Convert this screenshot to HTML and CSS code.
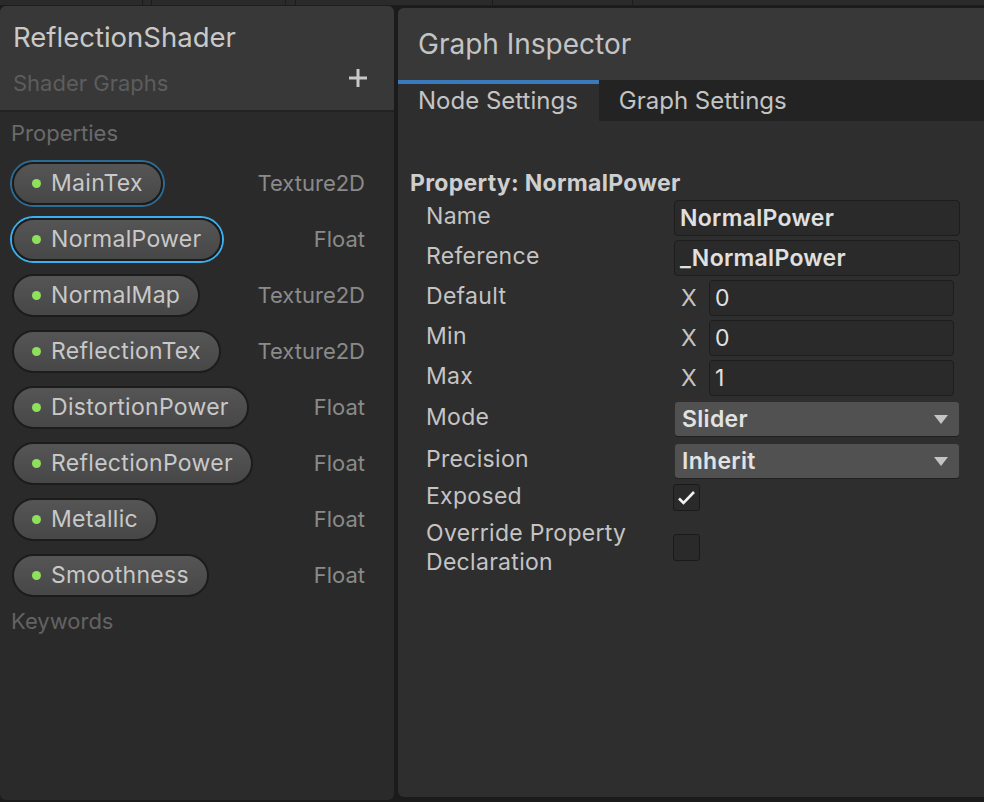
FILE: index.html
```html
<!DOCTYPE html>
<html>
<head>
<meta charset="utf-8">
<link rel="stylesheet" href="styles.css">
</head>
<body>
<div class="topstrip">
  <span class="seg w143"></span><span class="seg w9"></span><span class="seg w134"></span><span class="seg w10"></span><span class="seg w197"></span><span class="seg w140"></span><span class="seg grow"></span>
</div>
<div class="main">
  <section class="blackboard">
    <header class="bb-header">
      <div class="bb-title">ReflectionShader</div>
      <div class="bb-sub">
        <span>Shader Graphs</span>
        <svg class="plus" width="20" height="20" viewBox="0 0 20 20"><path d="M10 1v18M1 10h18" stroke="#c8c8c8" stroke-width="3"/></svg>
      </div>
    </header>
    <div class="bb-body">
      <div class="section-label">Properties</div>
      <ul class="props">
        <li class="prop-row"><span class="pill sel"><i class="dot"></i>MainTex</span><span class="type">Texture2D</span></li>
        <li class="prop-row"><span class="pill focus"><i class="dot"></i>NormalPower</span><span class="type">Float</span></li>
        <li class="prop-row"><span class="pill"><i class="dot"></i>NormalMap</span><span class="type">Texture2D</span></li>
        <li class="prop-row"><span class="pill"><i class="dot"></i>ReflectionTex</span><span class="type">Texture2D</span></li>
        <li class="prop-row"><span class="pill"><i class="dot"></i>DistortionPower</span><span class="type">Float</span></li>
        <li class="prop-row"><span class="pill"><i class="dot"></i>ReflectionPower</span><span class="type">Float</span></li>
        <li class="prop-row"><span class="pill"><i class="dot"></i>Metallic</span><span class="type">Float</span></li>
        <li class="prop-row"><span class="pill"><i class="dot"></i>Smoothness</span><span class="type">Float</span></li>
      </ul>
      <div class="section-label kw">Keywords</div>
    </div>
  </section>
  <section class="inspector">
    <header class="insp-header">Graph Inspector</header>
    <nav class="tabs">
      <div class="tab active">Node Settings</div>
      <div class="tab">Graph Settings</div>
    </nav>
    <div class="insp-body">
      <div class="prop-title">Property: NormalPower</div>
      <div class="fields">
        <div class="row"><span class="label">Name</span><span class="text-field">NormalPower</span></div>
        <div class="row"><span class="label">Reference</span><span class="text-field">_NormalPower</span></div>
        <div class="row"><span class="label">Default</span><span class="vec"><span class="axis">X</span><span class="text-field num">0</span></span></div>
        <div class="row"><span class="label">Min</span><span class="vec"><span class="axis">X</span><span class="text-field num">0</span></span></div>
        <div class="row"><span class="label">Max</span><span class="vec"><span class="axis">X</span><span class="text-field num">1</span></span></div>
        <div class="row drop-row"><span class="label">Mode</span><span class="dropdown"><span>Slider</span><svg width="14" height="9" viewBox="0 0 14 9"><path d="M0 0h14L7 9z" fill="#c4c4c4"/></svg></span></div>
        <div class="row drop-row"><span class="label">Precision</span><span class="dropdown"><span>Inherit</span><svg width="14" height="9" viewBox="0 0 14 9"><path d="M0 0h14L7 9z" fill="#c4c4c4"/></svg></span></div>
        <div class="row check-row"><span class="label">Exposed</span><span class="checkbox"><svg width="25" height="25" viewBox="0 0 25 25"><path d="M5 13.5l4.5 4.5L20 7" fill="none" stroke="#f2f2f2" stroke-width="2.6"/></svg></span></div>
        <div class="row check-row"><span class="label multi">Override Property<br>Declaration</span><span class="checkbox"></span></div>
      </div>
    </div>
  </section>
</div>
</body>
</html>
```

FILE: styles.css
```css
* { box-sizing: border-box; margin: 0; padding: 0; }
html, body { width: 984px; height: 802px; overflow: hidden; }
body {
  background: #1b1b1b;
  font-family: Inter, "Noto Sans", sans-serif;
  color: #c4c4c4;
}

.topstrip {
  height: 6px;
  display: flex;
  background: #2a2a2a;
  border-bottom: 1px solid #1e1e1e;
}
.seg { border-right: 1px solid #1c1c1c; height: 100%; }
.w143 { width: 143px; }
.w9 { width: 9px; }
.w134 { width: 134px; }
.w10 { width: 10px; }
.w197 { width: 197px; }
.w140 { width: 140px; }
.grow { flex: 1; border-right: none; }

.main {
  display: flex;
  gap: 4px;
  height: 796px;
}

/* Blackboard */
.blackboard {
  width: 394px;
  margin-bottom: 2px;
  background: #2a2a2a;
  border-radius: 6px;
  overflow: hidden;
  display: flex;
  flex-direction: column;
}
.bb-header {
  height: 106px;
  background: #383838;
  border-bottom: 2px solid #222222;
  padding: 15px 26px 0 13px;
}
.bb-title {
  font-size: 27.5px;
  line-height: 32px;
  color: #c9c9c9;
}
.bb-sub {
  margin-top: 15px;
  display: flex;
  align-items: center;
  justify-content: space-between;
  font-size: 22px;
  line-height: 26px;
  color: #5d5d5d;
}
.plus { margin-bottom: 10px; }

.bb-body { padding-top: 8px; }
.section-label {
  font-size: 22px;
  line-height: 26px;
  color: #6a6a6a;
  padding-left: 11px;
}
.section-label.kw { margin-top: 5px; color: #636363; }

.props { list-style: none; margin-top: 9px; }
.prop-row {
  height: 56px;
  display: flex;
  align-items: center;
  justify-content: space-between;
  padding: 0 29px 0 12px;
}
.pill {
  height: 43px;
  display: flex;
  align-items: center;
  gap: 10px;
  padding: 0 18px 0 18px;
  border: 2px solid #1c1c1c;
  border-radius: 22px;
  background: linear-gradient(#555555, #474747);
  font-size: 23px;
  letter-spacing: 0.3px;
  color: #c8c8c8;
}
.pill.sel { box-shadow: 0 0 0 2px #2c6c95; }
.pill.focus { box-shadow: 0 0 0 2px #3bb0f0; }
.dot {
  width: 9px;
  height: 9px;
  border-radius: 50%;
  background: #8fe05a;
}
.type {
  font-size: 22px;
  color: #8a8a8a;
}

/* Inspector */
.inspector {
  flex: 1;
  margin-top: 2px;
  margin-bottom: 5px;
  background: #2e2e2e;
  border-radius: 6px 0 0 6px;
  overflow: hidden;
  display: flex;
  flex-direction: column;
}
.insp-header {
  height: 72px;
  background: #383838;
  display: flex;
  align-items: center;
  padding-left: 20px;
  font-size: 28px;
  line-height: 32px;
  color: #c4c4c4;
}
.tabs {
  height: 41px;
  background: #232323;
  display: flex;
}
.tab {
  padding: 0 21px 0 20px;
  display: flex;
  align-items: center;
  font-size: 24px;
  color: #c4c4c4;
}
.tab.active {
  background: #2e2e2e;
  box-shadow: inset 0 4px 0 #3a79bb;
}

.insp-body { padding: 48px 24px 0 12px; }
.prop-title {
  font-weight: 700;
  font-size: 23px;
  letter-spacing: 0.3px;
  line-height: 28px;
  color: #cfcfcf;
}
.fields { margin-top: 3px; padding-left: 16px; }
.row {
  display: grid;
  grid-template-columns: 248px 286px;
  align-items: center;
  min-height: 36px;
  margin-bottom: 4px;
}
.row.drop-row { min-height: 38px; }
.row.check-row { min-height: 27px; }
.label {
  font-size: 23px;
  letter-spacing: 0.3px;
  line-height: 22px;
  padding-bottom: 5px;
  color: #c4c4c4;
}
.check-row .label { padding-bottom: 3px; }
.check-row .label.multi { line-height: 29px; padding-top: 4px; }

.text-field {
  height: 36px;
  display: flex;
  align-items: center;
  padding: 0 5px;
  background: #2a2a2a;
  border: 1px solid #1d1d1d;
  border-radius: 4px;
  font-size: 23px;
  letter-spacing: 0.3px;
  font-weight: 600;
  color: #e0e0e0;
}
.vec {
  display: flex;
  align-items: center;
  padding-right: 6px;
}
.axis {
  width: 35px;
  padding-left: 7px;
  font-size: 23px;
  color: #c4c4c4;
}
.text-field.num { flex: 1; font-weight: 400; }

.dropdown {
  height: 34px;
  margin: 0 1px;
  display: flex;
  align-items: center;
  justify-content: space-between;
  padding: 0 11px 0 7px;
  background: #515151;
  border-radius: 3px;
  box-shadow: 0 1px 0 #202020;
  font-size: 23px;
  letter-spacing: 0.3px;
  font-weight: 600;
  color: #e2e2e2;
}
.checkbox {
  width: 27px;
  height: 27px;
  margin-left: -1px;
  background: #2a2a2a;
  border: 1px solid #1a1a1a;
  border-radius: 3px;
  display: flex;
}
```
